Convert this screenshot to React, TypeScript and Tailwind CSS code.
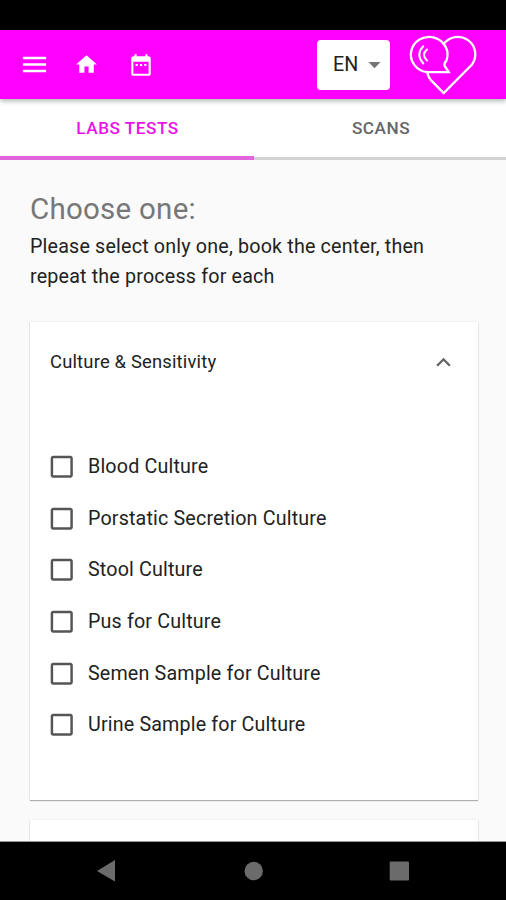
import { useState } from "react";
import {
  MdArrowDropDown,
  MdCheckBox,
  MdCheckBoxOutlineBlank,
  MdDateRange,
  MdExpandLess,
  MdHome,
  MdMenu,
} from "react-icons/md";

const tests = [
  "Blood Culture",
  "Porstatic Secretion Culture",
  "Stool Culture",
  "Pus for Culture",
  "Semen Sample for Culture",
  "Urine Sample for Culture",
];

const cardShadow =
  "shadow-[0_1px_1px_rgba(0,0,0,0.28),0_0_2px_rgba(0,0,0,0.1)]";

function Logo() {
  return (
    <svg
      viewBox="24 15.5 216 192"
      className="h-16 w-[72px]"
      fill="none"
      stroke="white"
      strokeWidth="7"
      strokeLinecap="round"
    >
      <path d="M82 133A55 53 0 1 1 139 99Q131 107 134 114L146 133H82" />
      <path d="M131 49A51 51 0 0 1 216 110L131 196L92 156Q84 147 82 134" />
      <path d="M70 55Q46 80 70 107" strokeWidth="6" />
      <path d="M81 65Q63 80 81 98" strokeWidth="6" />
    </svg>
  );
}

function Header() {
  return (
    <header className="relative z-10 flex h-[69px] shrink-0 items-center bg-[#ff00ff] text-white shadow-[0_2px_5px_rgba(0,40,20,0.35)]">
      <button className="ml-[19px]">
        <MdMenu size={31} />
      </button>
      <button className="ml-6">
        <MdHome size={25} />
      </button>
      <button className="ml-[29px]">
        <MdDateRange size={26} />
      </button>
      <button className="ml-auto flex h-[50px] w-[73px] items-center rounded-[4px] bg-white pl-4 text-[19.7px] text-[#222]">
        EN
        <MdArrowDropDown size={29} className="ml-0.5 text-[#757575]" />
      </button>
      <div className="mr-[26px] ml-[18px]">
        <Logo />
      </div>
    </header>
  );
}

function Tabs() {
  return (
    <div className="flex h-[61px] shrink-0 border-b-[3px] border-[#d3d3d3] bg-white text-[17.2px] font-medium tracking-[0.5px]">
      <button className="-mb-[3px] flex w-[254px] items-center justify-center border-b-4 border-[#e065dc] pt-[3px] pl-px text-[#ea12e6]">
        LABS TESTS
      </button>
      <button className="flex flex-1 items-center justify-center pt-px pl-0.5 text-[#666]">
        SCANS
      </button>
    </div>
  );
}

export default function App() {
  const [selected, setSelected] = useState<string | null>(null);

  return (
    <div className="flex h-[900px] w-[506px] flex-col overflow-hidden bg-[#fafafa] font-['Roboto',sans-serif] text-[19.7px] text-[#222]">
      <div className="h-[30px] shrink-0 bg-black" />
      <Header />
      <Tabs />

      <main className="min-h-0 flex-1 overflow-hidden border-b border-[#999] pt-[29px] pr-7 pl-[30px]">
        <h1 className="text-[29.5px] leading-[40px] tracking-[0.25px] text-[#777]">
          Choose one:
        </h1>
        <p className="pt-[3px] leading-[29.5px] tracking-[0.18px]">
          Please select only one, book the center, then
          <br />
          repeat the process for each
        </p>

        <section className={`mt-[31px] h-[478px] bg-white ${cardShadow}`}>
          <div className="flex h-20 items-center justify-between pr-5 pl-5 text-[18.4px] tracking-[0.18px]">
            Culture &amp; Sensitivity
            <MdExpandLess size={29} className="text-[#666]" />
          </div>
          <div className="pt-[38.8px] tracking-[0.16px]">
            {tests.map((test) => (
              <button
                key={test}
                onClick={() => setSelected(test)}
                className="flex h-[51.7px] w-full items-center gap-[11.5px] pl-[17px]"
              >
                {selected === test ? (
                  <MdCheckBox size={29.5} className="text-[#ff00ff]" />
                ) : (
                  <MdCheckBoxOutlineBlank size={29.5} className="text-[#555]" />
                )}
                {test}
              </button>
            ))}
          </div>
        </section>

        <section className={`mt-5 h-20 bg-white ${cardShadow}`} />
      </main>

      <nav className="h-[58px] shrink-0 bg-black">
        <svg viewBox="0 0 506 58" className="h-full w-full" fill="#6b6b6b">
          <path d="M97 29L115 18V39.5Z" />
          <circle cx="253.7" cy="29" r="9.2" />
          <rect x="389.7" y="19.5" width="19.3" height="19" rx="1" />
        </svg>
      </nav>
    </div>
  );
}
